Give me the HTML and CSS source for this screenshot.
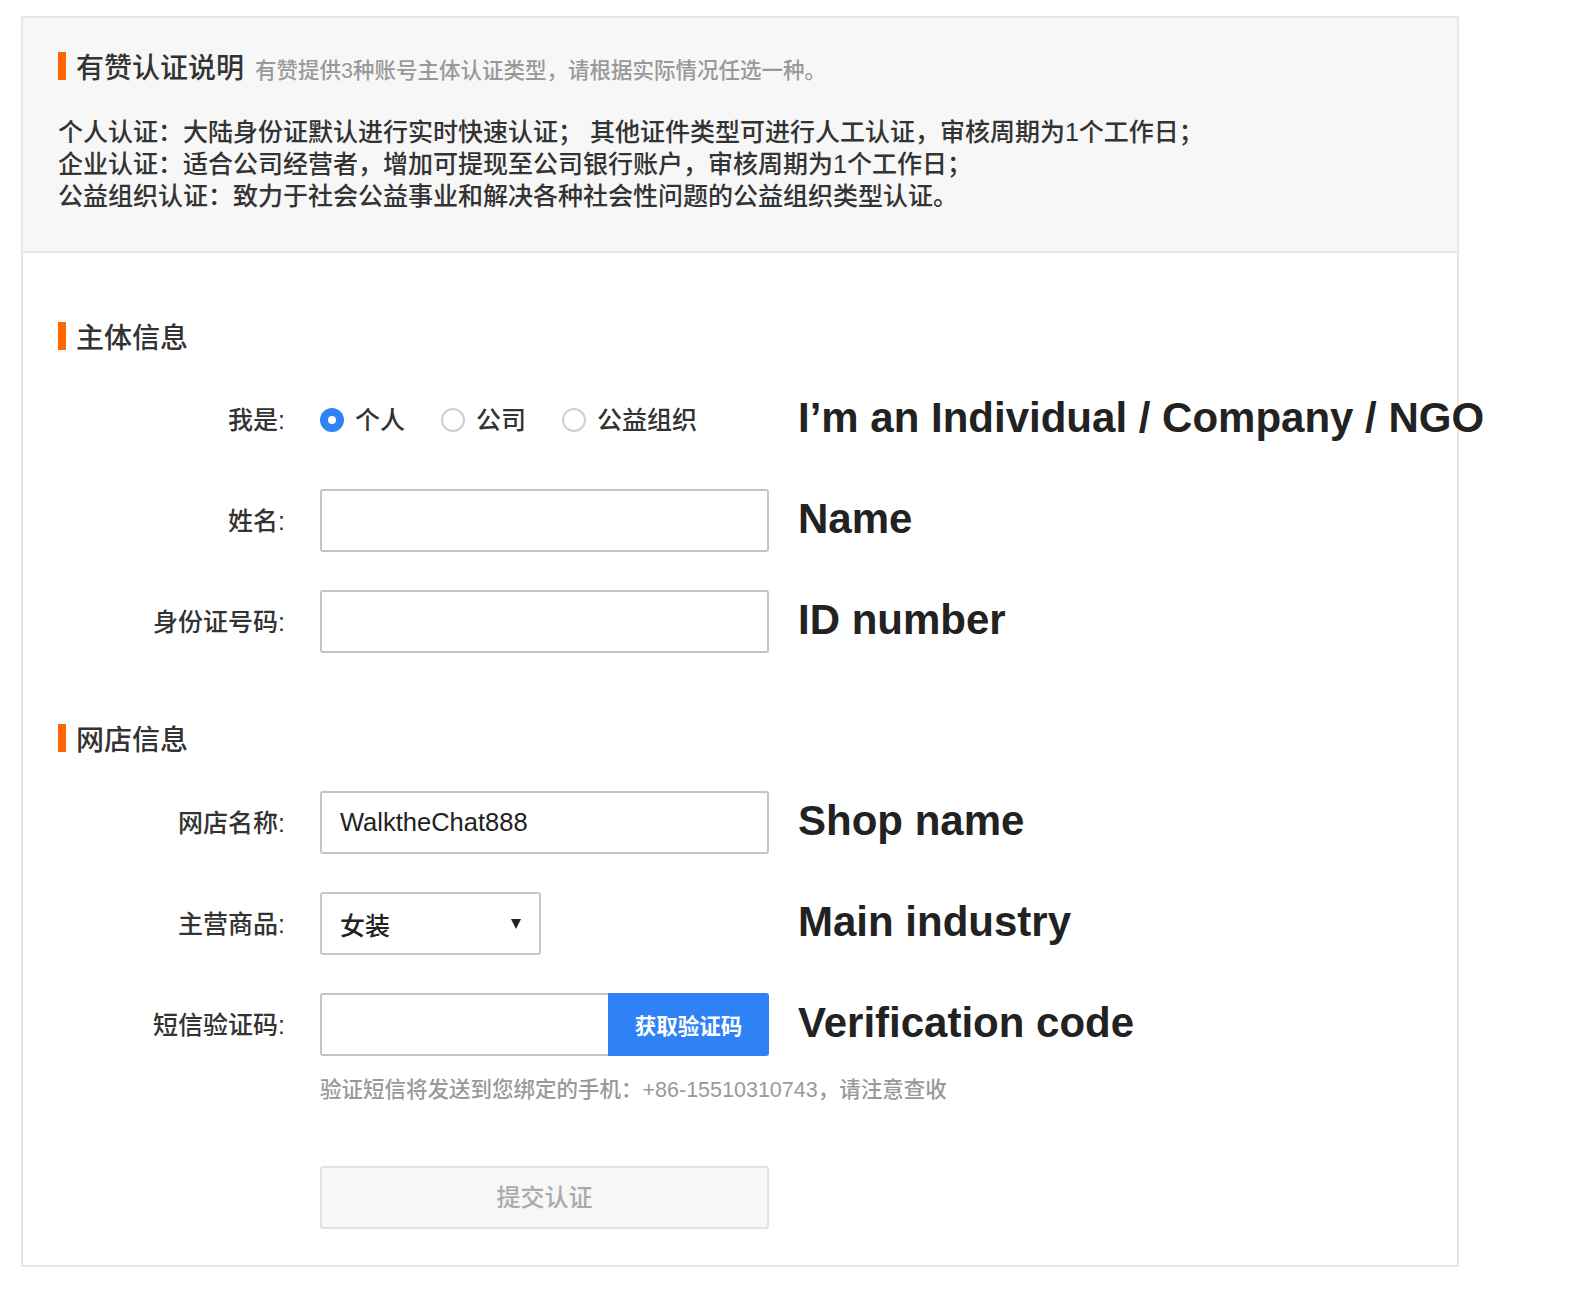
FILE: index.html
```html
<!DOCTYPE html>
<html lang="zh-CN">
<head>
<meta charset="utf-8">
<title>有赞认证</title>
<link rel="stylesheet" href="styles.css">
</head>
<body>
<div class="card">
  <div class="intro">
    <div class="intro-head">
      <span class="bar"></span>
      <h2 class="intro-title">有赞认证说明</h2>
      <span class="intro-sub">有赞提供3种账号主体认证类型，请根据实际情况任选一种。</span>
    </div>
    <p class="intro-text">个人认证：大陆身份证默认进行实时快速认证； 其他证件类型可进行人工认证，审核周期为1个工作日；<br>企业认证：适合公司经营者，增加可提现至公司银行账户，审核周期为1个工作日；<br>公益组织认证：致力于社会公益事业和解决各种社会性问题的公益组织类型认证。</p>
  </div>
  <div class="body">
    <div class="section-title"><span class="bar"></span><span class="section-text">主体信息</span></div>
    <div class="rows">
      <div class="row">
        <div class="label">我是:</div>
        <div class="control radios">
          <span class="radio checked"></span><span class="radio-text">个人</span>
          <span class="radio"></span><span class="radio-text">公司</span>
          <span class="radio"></span><span class="radio-text">公益组织</span>
        </div>
        <div class="note">I’m an Individual / Company / NGO</div>
      </div>
      <div class="row">
        <div class="label">姓名:</div>
        <div class="control"><div class="input"></div></div>
        <div class="note">Name</div>
      </div>
      <div class="row">
        <div class="label">身份证号码:</div>
        <div class="control"><div class="input"></div></div>
        <div class="note">ID number</div>
      </div>
    </div>
    <div class="section-title second"><span class="bar"></span><span class="section-text">网店信息</span></div>
    <div class="rows">
      <div class="row">
        <div class="label">网店名称:</div>
        <div class="control"><div class="input">WalktheChat888</div></div>
        <div class="note">Shop name</div>
      </div>
      <div class="row">
        <div class="label">主营商品:</div>
        <div class="control"><div class="select"><span>女装</span><span class="arrow"></span></div></div>
        <div class="note">Main industry</div>
      </div>
      <div class="row">
        <div class="label">短信验证码:</div>
        <div class="control"><div class="code-group"><div class="code-input"></div><div class="code-btn">获取验证码</div></div></div>
        <div class="note">Verification code</div>
      </div>
    </div>
    <div class="hint">验证短信将发送到您绑定的手机：+86-15510310743，请注意查收</div>
    <div class="submit"><span class="submit-text">提交认证</span></div>
  </div>
</div>
</body>
</html>
```

FILE: styles.css
```css
html, body {
  margin: 0;
  padding: 0;
  background: #fff;
}
body {
  font-family: "Liberation Sans", "Noto Sans CJK SC", sans-serif;
  color: #333;
  font-weight: 500;
}
.card {
  margin: 16px 0 0 21px;
  width: 1438px;
  box-sizing: border-box;
  border: 2px solid #e6e6e6;
  background: #fff;
}
.intro {
  background: #f7f7f7;
  border-bottom: 2px solid #e6e6e6;
  padding: 34px 35px 39px 35px;
}
.intro-head {
  display: flex;
  align-items: center;
  height: 28px;
}
.bar {
  display: block;
  width: 8px;
  height: 28px;
  background: #ff6600;
  margin-right: 10px;
  flex: none;
}
.intro-title {
  margin: 0;
  padding-top: 6px;
  font-size: 28px;
  line-height: 28px;
  font-weight: 500;
  color: #333;
}
.intro-sub {
  margin-left: 11px;
  font-size: 21.5px;
  line-height: 24px;
  color: #999;
  padding-top: 10px;
}
.intro-text {
  margin: 36px 0 0 0;
  font-size: 25px;
  line-height: 32px;
  color: #333;
}
.body {
  padding: 69px 35px 36px 35px;
  overflow: visible;
}
.section-title {
  display: flex;
  align-items: center;
  height: 28px;
  font-size: 28px;
  line-height: 28px;
  color: #333;
  margin-bottom: 38px;
}
.section-text {
  padding-top: 6px;
}
.section-title.second {
  margin-top: 71px;
  margin-bottom: 39px;
}
.rows {
  display: flex;
  flex-direction: column;
  gap: 38px;
}
.row {
  display: flex;
  align-items: center;
  height: 63px;
}
.label {
  width: 227px;
  margin-right: 35px;
  text-align: right;
  font-size: 25px;
  line-height: 30px;
  color: #333;
  flex: none;
}
.control {
  width: 449px;
  flex: none;
  display: flex;
  align-items: center;
}
.note {
  margin-left: 29px;
  padding-bottom: 3px;
  font-family: "Liberation Sans", sans-serif;
  font-weight: 700;
  font-size: 42px;
  line-height: 42px;
  color: #222;
  white-space: nowrap;
}
.radios {
  font-size: 25px;
  line-height: 30px;
}
.radio {
  display: block;
  width: 24px;
  height: 24px;
  box-sizing: border-box;
  border-radius: 50%;
  border: 2px solid #cfcfcf;
  background: #fff;
  flex: none;
}
.radio.checked {
  border: 8px solid #2f82f6;
}
.radio-text {
  margin-left: 11px;
  margin-right: 36px;
  color: #333;
}
.input {
  width: 449px;
  height: 63px;
  box-sizing: border-box;
  border: 2px solid #c4c4c4;
  border-radius: 3px;
  padding: 0 18px;
  font-size: 25.5px;
  line-height: 59px;
  color: #222;
  background: #fff;
}
.select {
  width: 221px;
  height: 63px;
  box-sizing: border-box;
  border: 2px solid #c8c8c8;
  border-radius: 3px;
  padding: 0 18px;
  display: flex;
  align-items: center;
  justify-content: space-between;
  font-size: 25px;
  color: #222;
}
.arrow {
  width: 0;
  height: 0;
  border-left: 5px solid transparent;
  border-right: 5px solid transparent;
  border-top: 10px solid #222;
}
.code-group {
  display: flex;
  width: 449px;
  height: 63px;
}
.code-input {
  flex: none;
  width: 288px;
  height: 63px;
  box-sizing: border-box;
  border: 2px solid #c4c4c4;
  border-right: none;
  border-radius: 3px 0 0 3px;
}
.code-btn {
  flex: 1;
  height: 63px;
  background: #2f82f6;
  border-radius: 0 3px 3px 0;
  color: #fff;
  font-size: 21.5px;
  font-weight: 700;
  display: flex;
  align-items: center;
  justify-content: center;
}
.hint {
  margin: 22px 0 0 262px;
  font-size: 21.5px;
  line-height: 24px;
  color: #999;
}
.submit {
  margin: 64px 0 0 262px;
  width: 449px;
  height: 63px;
  box-sizing: border-box;
  border: 2px solid #e2e2e2;
  border-radius: 3px;
  background: #f7f7f7;
  color: #aaa;
  font-size: 24px;
  display: flex;
  align-items: center;
  justify-content: center;
}
.submit-text {
  padding-bottom: 4px;
}
```
